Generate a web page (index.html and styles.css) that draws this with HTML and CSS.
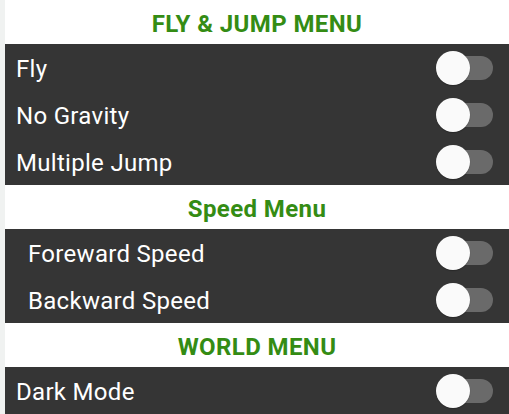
FILE: index.html
```html
<!DOCTYPE html>
<html lang="en">
<head>
    <meta charset="UTF-8">
    <meta name="viewport" content="width=device-width, initial-scale=1.0">
    <title>Mod Menu</title>
    <link rel="stylesheet" href="styles.css">
</head>
<body>
    <div class="menu">
        <!-- Fly & Jump -->
        <div class="section-title">FLY &amp; JUMP MENU</div>
        <div class="panel">
            <div class="row"><span class="label">Fly</span><span class="switch"><span class="track"></span><span class="thumb"></span></span></div>
            <div class="row"><span class="label">No Gravity</span><span class="switch"><span class="track"></span><span class="thumb"></span></span></div>
            <div class="row"><span class="label">Multiple Jump</span><span class="switch"><span class="track"></span><span class="thumb"></span></span></div>
        </div>

        <!-- Speed -->
        <div class="section-title">Speed Menu</div>
        <div class="panel indented">
            <div class="row"><span class="label">Foreward Speed</span><span class="switch"><span class="track"></span><span class="thumb"></span></span></div>
            <div class="row"><span class="label">Backward Speed</span><span class="switch"><span class="track"></span><span class="thumb"></span></span></div>
        </div>

        <!-- World -->
        <div class="section-title">WORLD MENU</div>
        <div class="panel">
            <div class="row"><span class="label">Dark Mode</span><span class="switch"><span class="track"></span><span class="thumb"></span></span></div>
        </div>
    </div>
</body>
</html>
```

FILE: styles.css
```css
body {
    margin: 0;
    background-color: #f0f2f1;
    font-family: Roboto, "Liberation Sans", sans-serif;
    height: 414px;
    overflow: hidden;
}
.menu {
    margin-left: 5px;
    background-color: #ffffff;
    min-height: 100%;
}
.section-title {
    height: 44px;
    box-sizing: border-box;
    padding-top: 3px;
    display: flex;
    align-items: center;
    justify-content: center;
    color: #348c14;
    font-weight: bold;
    font-size: 24px;
    letter-spacing: 0.4px;
}
.panel {
    background-color: #353535;
}
.row {
    height: 47px;
    display: flex;
    align-items: center;
    justify-content: space-between;
    padding: 0 16px 0 11px;
}
.indented .row {
    padding-left: 23px;
}
.label {
    color: #ffffff;
    font-size: 24px;
    letter-spacing: 0.3px;
    padding-top: 2px;
}
.switch {
    position: relative;
    width: 57px;
    height: 34px;
}
.track {
    position: absolute;
    left: 6px;
    right: 0;
    top: 5px;
    height: 24px;
    border-radius: 12px;
    background-color: #6a6a6a;
}
.thumb {
    position: absolute;
    left: 0;
    top: 0;
    width: 34px;
    height: 34px;
    border-radius: 50%;
    background-color: #fafafa;
    box-shadow: 0 1px 1px rgba(0, 0, 0, 0.25);
}
```
